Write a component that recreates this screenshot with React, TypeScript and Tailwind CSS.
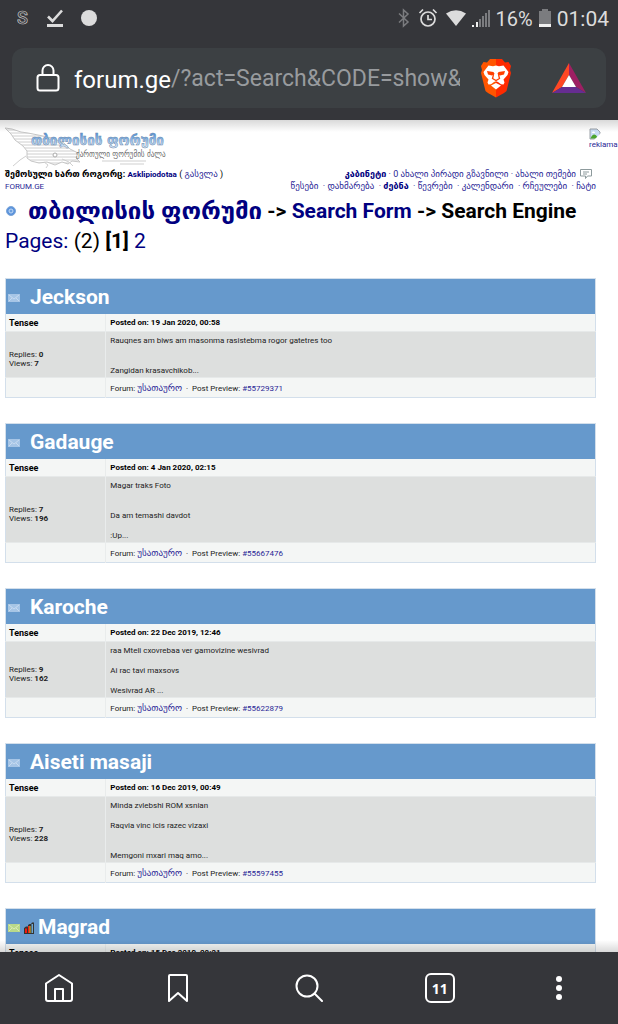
import React from "react";

type Topic = {
  title: string;
  posted: string;
  replies: number;
  views: number;
  lines: string[];
  post: string;
};

const topics: Topic[] = [
  {
    title: "Jeckson",
    posted: "19 Jan 2020, 00:58",
    replies: 0,
    views: 7,
    lines: ["Rauqnes am biws am masonma rasistebma rogor gatetres too", "", "", "Zangidan krasavchikob..."],
    post: "#55729371",
  },
  {
    title: "Gadauge",
    posted: "4 Jan 2020, 02:15",
    replies: 7,
    views: 196,
    lines: ["Magar traks Foto", "", "", "Da am temashi davdot", "", ":Up..."],
    post: "#55667476",
  },
  {
    title: "Karoche",
    posted: "22 Dec 2019, 12:46",
    replies: 9,
    views: 162,
    lines: ["raa Mteli cxovrebaa ver gamovizine wesivrad", "", "Ai rac tavi maxsovs", "", "Wesivrad AR ..."],
    post: "#55622879",
  },
  {
    title: "Aiseti masaji",
    posted: "16 Dec 2019, 00:49",
    replies: 7,
    views: 228,
    lines: ["Minda zvlebshi ROM xsnian", "", "Raqvia vinc icis razec vizaxi", "", "", "Memgoni mxari maq amo..."],
    post: "#55597455",
  },
];

const menu = ["წესები", "დახმარება", "ძებნა", "წევრები", "კალენდარი", "რჩეულები", "ჩატი"];

function StatusBar() {
  return (
    <div className="flex h-9 items-center justify-between pr-[9px] pl-[17px] text-[#dcdcdc]">
      <div className="flex items-center gap-[18px]">
        <svg className="h-5 w-3" viewBox="0 0 12 20" aria-hidden="true">
          <text x="0" y="16" fontSize="18" fontWeight="500" fontFamily="Roboto, sans-serif" fill="none" stroke="#c8c8c8" strokeWidth="0.7">
            S
          </text>
        </svg>
        <svg className="h-5 w-4" viewBox="0 0 16 20" aria-hidden="true">
          <path d="M1 8.500l4.500 4.500L15 2.500" fill="none" stroke="currentColor" strokeWidth="2.6" />
          <path d="M0 16h16v3H0z" fill="currentColor" />
        </svg>
        <span className="size-4 rounded-full bg-[#dcdcdc]" />
      </div>
      <div className="flex items-center gap-[6px]">
        <div className="flex items-center gap-2">
          <svg className="h-5 w-3" viewBox="0 0 12 20" fill="none" stroke="#7b7c7f" strokeWidth="1.5" aria-hidden="true">
            <path d="M1 5.500l9 8.500-4.500 4V2l4.500 4L1 14.500" />
          </svg>
          <svg className="size-5" viewBox="0 0 20 20" fill="none" stroke="currentColor" strokeWidth="1.7" aria-hidden="true">
            <circle cx="10" cy="11" r="7" />
            <path d="M10 7v4.500h4M1.500 5L5 1.500M18.500 5L15 1.500" />
          </svg>
          <svg className="size-5" viewBox="0 0 20 20" aria-hidden="true">
            <path d="M0 5.500Q10-1 20 5.500L10 18z" fill="currentColor" />
          </svg>
        </div>
        <svg className="h-5 w-[18px]" viewBox="0 0 18 20" aria-hidden="true">
          <path d="M0 17h2v2H0zM4 14h2v5H4z" fill="#f0f0f0" />
          <path d="M7 11h2v8H7zM10 8h2v11h-2zM13 5h2v14h-2zM16 2h2v17h-2z" fill="#7b7c7f" />
        </svg>
        <span className="pt-[2px] text-[20px] leading-5">16%</span>
        <svg className="h-5 w-3" viewBox="0 0 12 20" aria-hidden="true">
          <path d="M3 1h6v2h3v16H0V3h3z" fill="#7b7c7f" />
          <path d="M0 16h12v3H0z" fill="#f0f0f0" />
        </svg>
        <span className="pt-[2px] text-[21px] leading-5">01:04</span>
      </div>
    </div>
  );
}

function AddressBar() {
  return (
    <div className="m-3 flex h-[60px] items-center rounded-xl bg-[#3c4043] pr-5 pl-6">
      <svg className="h-7 w-6 shrink-0" viewBox="0 0 24 28" fill="none" stroke="#fff" strokeWidth="2" aria-hidden="true">
        <rect x="1.500" y="11" width="21" height="15.500" rx="2.500" />
        <path d="M6.500 11V6.500a5.500 5.500 0 0 1 11 0V11" />
      </svg>
      <label htmlFor="path" className="ml-[14px] pt-[3px] text-[24px] text-white">
        forum.ge
      </label>
      <input
        id="path"
        className="min-w-0 flex-1 bg-transparent pt-[3px] text-[23px] text-[#989b9e] outline-none"
        defaultValue="/?act=Search&CODE=show&searchid"
      />
      <button className="ml-5 shrink-0" aria-label="Brave Shields">
        <svg className="h-10 w-8" viewBox="0 0 32 40" aria-hidden="true">
          <defs>
            <linearGradient id="lion">
              <stop offset="0.5" stopColor="#ff5500" />
              <stop offset="0.5" stopColor="#ff2a00" />
            </linearGradient>
          </defs>
          <path d="M10 1h12l3 3.500 3.500-0.500L31 8l-1 4 1 3-4.500 18Q26 34 16 39.500 6 34 5.500 33L1 15l1-3-1-4 2.500-4L7 4.500z" fill="url(#lion)" />
          <path d="M8.500 7.500L13 8.300l3-0.800 3 0.800 4.500-0.800 5 6.500-1 3-4 4.500 1 3-1 2-2.500-0.300-3-2.200-2-0.800-2 0.800-3 2.200-2.500 0.300-1-2 1-3-4-4.500-1-3z" fill="#fff" />
          <path d="M11 27.500l5-2.500 5 2.500-5 4z" fill="#fff" />
          <path d="M7 13l6.500 1 1 2-2.500 1.500-4-1zM25 13l-6.500 1-1 2 2.500 1.500 4-1z" fill="#ff3f00" />
          <path d="M13.500 15l-0.300 3-0.700 2.500 3.500 2 3.500-2L18.800 18l-0.300-3" fill="none" stroke="#ff3f00" strokeWidth="1.300" />
        </svg>
      </button>
      <button className="ml-10 shrink-0" aria-label="Brave Rewards">
        <svg className="h-8 w-[34px]" viewBox="0 0 34 32" aria-hidden="true">
          <path d="M17 1v12l-7 12L0 31z" fill="#ff4724" />
          <path d="M17 1l17 30-10-6-7-12z" fill="#9e1f63" />
          <path d="M0 31l10-6h14l10 6z" fill="#662d91" />
          <path d="M17 13l7 12H10z" fill="#fff" />
        </svg>
      </button>
    </div>
  );
}

function Logo() {
  return (
    <svg className="h-[45px] w-[170px]" viewBox="0 0 170 45" role="img" aria-label="თბილისის ფორუმი">
      <defs>
        <linearGradient id="sky" x2="0" y2="1">
          <stop offset="0.2" stopColor="#5b9be0" />
          <stop offset="0.9" stopColor="#dcecfb" />
        </linearGradient>
        <pattern id="lines" width="4" height="3" patternUnits="userSpaceOnUse">
          <path d="M0 1h4" stroke="#cecece" strokeWidth="1" />
        </pattern>
      </defs>
      <path
        d="M5 5l7 1 9 3 7 1 10 2 14 3 12 5 6 6 8 4-2 5 4 4-8-1-4 3-6-2-7 3-8-3-8 1-8-2-4-3 0-7-4-5-8-6-4-6z"
        fill="url(#lines)"
        stroke="#c6c6c6"
      />
      <path d="M26 33l-6 4-7 6M44 39l4 3-2 3M62 36l7 3 4 4M102 38h44M120 41h24" fill="none" stroke="#cfcfcf" />
      <circle cx="55" cy="32" r="2" fill="#fff" stroke="#aaa" />
      <text x="31" y="22" fontSize="15" fontWeight="700" fontFamily="'DejaVu Sans Condensed', 'DejaVu Sans', sans-serif" fill="url(#sky)" stroke="#6d89ab" strokeWidth="0.5">
        თბილისის ფორუმი
      </text>
      <text x="76" y="34" fontSize="8" fontFamily="'DejaVu Sans Condensed', 'DejaVu Sans', sans-serif" fill="#6d6d6d">
        ქართული ფორუმის ძალა
      </text>
    </svg>
  );
}

function BrokenImage() {
  return (
    <a href="#reklama" className="block w-[29px] overflow-hidden text-[8px] leading-[10px] text-[#2a1f96]">
      <svg className="size-3" viewBox="0 0 12 12" aria-hidden="true">
        <path d="M1 1h7l3 3v7H1z" fill="#c9dcf5" stroke="#9aa0a6" />
        <path d="M1.500 10.500c2-5 5-5 7-1l-2 1z" fill="#4ca52e" />
        <path d="M3 5c0-2 3-2 3 0z" fill="#fff" />
        <path d="M12 5L5 12h7z" fill="#fff" />
      </svg>
      reklama
    </a>
  );
}

function Envelope({ hot }: { hot?: boolean }) {
  return (
    <svg className="mt-1 h-2 w-3 shrink-0" viewBox="0 0 12 8" aria-hidden="true">
      <path d="M0 0h12v8H0z" fill={hot ? "#b9d98a" : "#a6c5e6"} />
      <path d="M1 1l5 4 5-4M1 7l3-3M11 7L8 4" fill="none" stroke={hot ? "#e3f0c0" : "#cfe0f2"} strokeWidth="0.8" />
    </svg>
  );
}

function PollIcon() {
  return (
    <svg className="mt-1 ml-1 h-3 w-[10px] shrink-0" viewBox="0 0 10 12" aria-hidden="true">
      <path d="M0 6l2-1.500h2V3l1.500-1H7l1-1.500h2V12H0z" fill="#333" />
      <path d="M1 6.500h2V11H1z" fill="#f01a10" />
      <path d="M4 4h1.500v7H4z" fill="#f01a10" />
      <path d="M5.500 4h1v7h-1z" fill="#f0c020" />
      <path d="M7.500 2H9v9H7.500z" fill="#6fa9d0" />
    </svg>
  );
}

function TopicHead({ title, posted, hot }: { title: string; posted: string; hot?: boolean }) {
  return (
    <thead>
      <tr className="h-[35px] bg-[#6699cc]">
        <th colSpan={2} className="p-0 pl-[2px]">
          <div className="flex items-center">
            <Envelope hot={hot} />
            {hot && <PollIcon />}
            <a
              href="#topic"
              className={`${hot ? "ml-1" : "ml-[10px]"} pt-[2px] text-[21px] leading-8 font-bold text-white`}
            >
              {title}
            </a>
          </div>
        </th>
      </tr>
      <tr className="h-[18px] bg-[#f4f6f5] text-black">
        <th className="p-0 pt-[2px] pl-[3px] text-[9px] font-bold">Tensee</th>
        <th className="border-l border-[#e9ecec] p-0 pt-[2px] pl-1 font-bold">Posted on: {posted}</th>
      </tr>
    </thead>
  );
}

function TopicTable({ topic }: { topic: Topic }) {
  return (
    <table className="mb-[25px] w-full table-fixed border-collapse border border-[#d3dfeb] text-left text-[8px] leading-[10px] text-[#222]">
      <colgroup>
        <col className="w-[17%]" />
        <col />
      </colgroup>
      <TopicHead title={topic.title} posted={topic.posted} />
      <tbody>
        <tr className="border-y border-[#e6e9e9] bg-[#dddfde]">
          <td className="p-0 pt-[9px] pl-[3px] align-middle leading-[9px]">
            Replies: <b>{topic.replies}</b>
            <br />
            Views: <b>{topic.views}</b>
          </td>
          <td className="border-l border-[#e9ecec] pt-1 pr-0 pb-px pl-1 align-top">
            {topic.lines.map((line, i) => (
              <p key={i} className="h-[10px]">
                {line}
              </p>
            ))}
          </td>
        </tr>
        <tr className="h-5 bg-[#f4f6f5]">
          <td className="p-0" />
          <td className="border-l border-[#e9ecec] p-0 pt-px pl-1">
            Forum:{" "}
            <a href="#forum" className="text-[9px] text-[#2a1f96]">
              უსათაურო
            </a>
            &nbsp; · &nbsp;Post Preview:{" "}
            <a href="#post" className="text-[#2a1f96]">
              {topic.post}
            </a>
          </td>
        </tr>
      </tbody>
    </table>
  );
}

function ForumPage() {
  return (
    <main className="relative min-h-0 flex-1 overflow-hidden bg-white">
      <div className="pointer-events-none absolute inset-x-0 top-0 h-3 bg-gradient-to-b from-black/15 to-transparent" />
      <div className="pointer-events-none absolute inset-x-0 bottom-0 h-3 bg-gradient-to-t from-black/15 to-transparent" />
      <div className="flex items-start justify-between pt-[3px]">
        <Logo />
        <div className="pt-[5px]">
          <BrokenImage />
        </div>
      </div>
      <div className="mr-[22px] ml-[5px]">
        <div className="flex justify-between text-[9px] leading-[12px] whitespace-nowrap text-[#2a1f96]">
          <div>
            <p className="text-black">
              <b>შემოსული ხართ როგორც: </b>
              <a href="#user" className="text-[8px] font-bold text-[#000080]">
                Asklipiodotaa
              </a>{" "}
              ({" "}
              <a href="#logout" className="text-[#2a1f96]">
                გასვლა
              </a>{" "}
              )
            </p>
            <a href="#home" className="block text-[8px] leading-[12px]">
              FORUM.GE
            </a>
          </div>
          <nav className="text-right">
            <p className="flex items-center justify-end pr-1">
              <a href="#cabinet" className="font-bold text-[#000080]">
                კაბინეტი
              </a>
              <span className="whitespace-pre"> · </span>
              <a href="#inbox">0 ახალი პირადი გზავნილი</a>
              <span className="whitespace-pre"> · </span>
              <a href="#new">ახალი თემები</a>
              <svg className="ml-1 h-[10px] w-3" viewBox="0 0 12 10" fill="none" stroke="#8d9a9c" aria-hidden="true">
                <path d="M0.500 0.500h11v6.500H7.500L5.500 9.500V7H0.500zM3 3h6M3 5h4" />
              </svg>
            </p>
            <p>
              {menu.map((item, i) => (
                <React.Fragment key={item}>
                  {i > 0 && <span>&nbsp; ·</span>}
                  <a href="#menu" className={item === "ძებნა" ? "font-bold text-[#000080]" : ""}>
                    {i > 0 && " "}
                    {item}
                  </a>
                </React.Fragment>
              ))}
            </p>
          </nav>
        </div>
        <h1 className="mt-[3px] flex h-[30px] items-center text-[21px] leading-[30px] font-bold whitespace-pre text-black">
          <svg className="mr-3 ml-px size-[10px] shrink-0" viewBox="0 0 10 10" aria-hidden="true">
            <circle cx="5" cy="5" r="4.500" fill="#5b93dc" stroke="#7ba5d8" />
            <circle cx="5" cy="5" r="2" fill="#6ba0e0" stroke="#c3daf5" />
          </svg>
          <a href="#home" className="text-[24px] text-[#000080]">
            თბილისის ფორუმი
          </a>
          <span>{" -> "}</span>
          <a href="#search" className="text-[#000080]">
            Search Form
          </a>
          <span>{" -> Search Engine"}</span>
        </h1>
        <p className="mb-[22px] text-[21px] leading-[30px] text-black">
          <a href="#pages" className="text-[#000080]">
            Pages:
          </a>{" "}
          (2) <b>[1]</b>{" "}
          <a href="#page2" className="text-[#000080]">
            2
          </a>
        </p>
        {topics.map((topic) => (
          <TopicTable key={topic.title} topic={topic} />
        ))}
        <table className="w-full table-fixed border-collapse border border-[#d3dfeb] text-left text-[8px] leading-[10px]">
          <colgroup>
            <col className="w-[17%]" />
            <col />
          </colgroup>
          <TopicHead title="Magrad" posted="15 Dec 2019, 08:21" hot />
        </table>
      </div>
    </main>
  );
}

function BottomBar() {
  return (
    <nav className="grid h-[72px] shrink-0 grid-cols-[5fr_5fr_6fr_5fr_5fr] place-items-center bg-[#35363a] text-white">
      <button aria-label="Home">
        <svg className="size-7" viewBox="0 0 28 28" fill="none" stroke="currentColor" strokeWidth="2" strokeLinejoin="round" aria-hidden="true">
          <path d="M1 9.500L14 1l13 8.500V25q0 2-2 2H3q-2 0-2-2zM10 27V15h8v12" />
        </svg>
      </button>
      <button aria-label="Bookmarks">
        <svg className="h-7 w-5" viewBox="0 0 20 28" fill="none" stroke="currentColor" strokeWidth="2" strokeLinejoin="round" aria-hidden="true">
          <path d="M1 2q0-1 1-1h16q1 0 1 1v25l-9-8-9 8z" />
        </svg>
      </button>
      <button aria-label="Search">
        <svg className="size-7" viewBox="0 0 28 28" fill="none" stroke="currentColor" strokeWidth="2" strokeLinecap="round" aria-hidden="true">
          <circle cx="12" cy="12" r="10.500" />
          <path d="M19.500 19.500L27 27" />
        </svg>
      </button>
      <button className="flex size-[30px] items-center justify-center rounded-md border-2 border-white font-['Open_Sans',sans-serif] text-[14px] font-bold">
        11
      </button>
      <button aria-label="Menu">
        <svg className="h-7 w-2" viewBox="0 0 8 28" fill="currentColor" aria-hidden="true">
          <circle cx="4" cy="5" r="3" />
          <circle cx="4" cy="14" r="3" />
          <circle cx="4" cy="23" r="3" />
        </svg>
      </button>
    </nav>
  );
}

export default function App() {
  return (
    <div className="flex h-screen flex-col overflow-hidden bg-white font-[Roboto,'DejaVu_Sans',sans-serif]">
      <header className="shrink-0 bg-[#35363a]">
        <StatusBar />
        <AddressBar />
      </header>
      <ForumPage />
      <BottomBar />
    </div>
  );
}
